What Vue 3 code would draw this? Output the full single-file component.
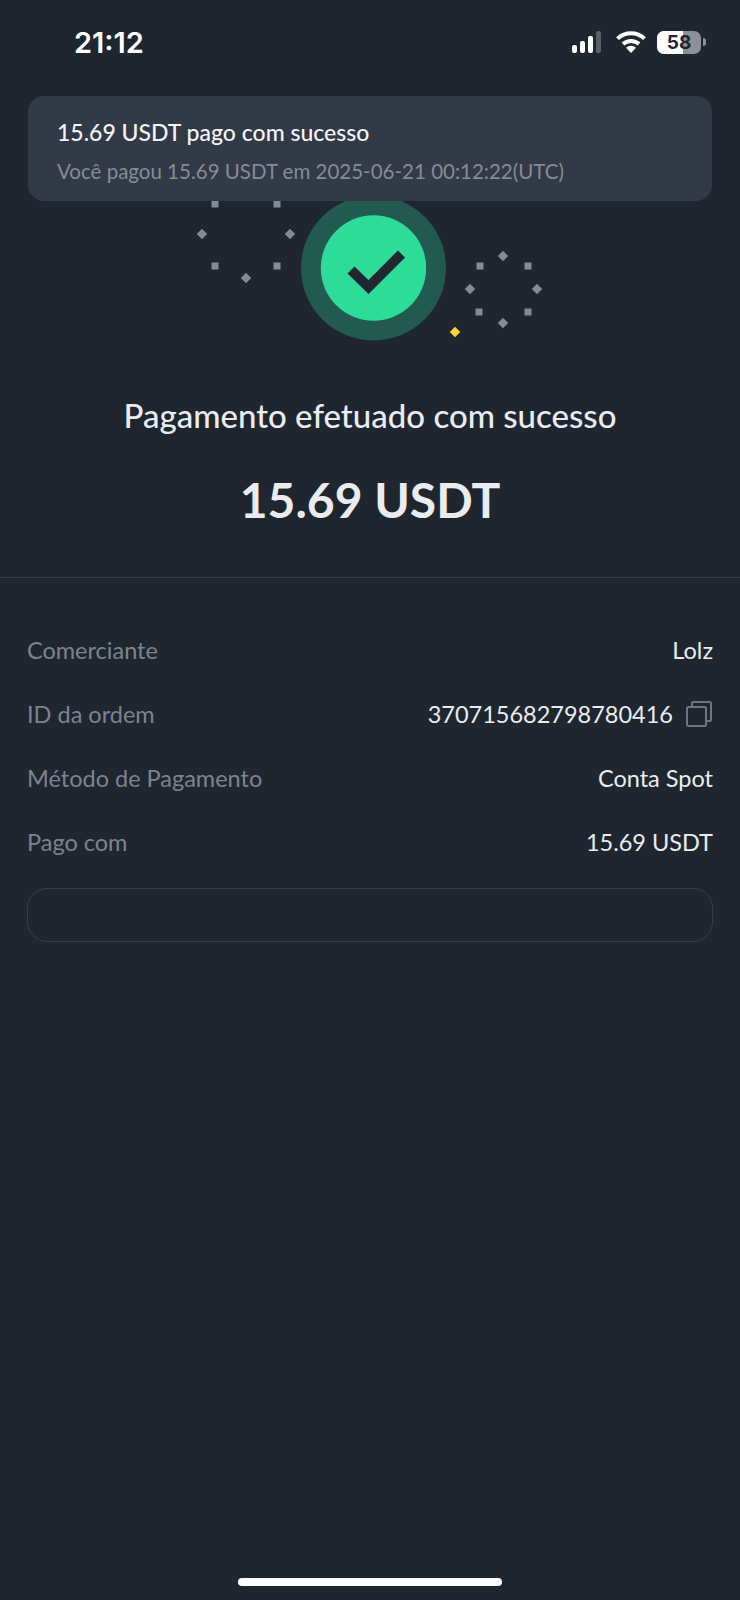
<template>
  <div class="page">
    <div class="status">
      <span class="time">21:12</span>
      <div class="status-icons">
        <svg width="34" height="24" viewBox="0 0 34 24">
          <rect x="1" y="15" width="5" height="8" rx="2" fill="#fff" />
          <rect x="9" y="11" width="5" height="12" rx="2" fill="#fff" />
          <rect x="17" y="6" width="5" height="17" rx="2" fill="#fff" />
          <rect x="25" y="1" width="5" height="22" rx="2" fill="#5b6068" />
        </svg>
        <svg class="wifi" width="32" height="24" viewBox="0 0 32 24">
          <path d="M2.5 8.6a19.5 19.5 0 0 1 27 0" fill="none" stroke="#fff" stroke-width="4" />
          <path d="M8 14a12 12 0 0 1 16 0" fill="none" stroke="#fff" stroke-width="4" />
          <path d="M16 23l-5-5.2a7 7 0 0 1 10 0z" fill="#fff" />
        </svg>
        <div class="battery">
          <div class="battery-body"><div class="battery-fill"></div><span>58</span></div>
          <div class="battery-cap"></div>
        </div>
      </div>
    </div>

    <div class="toast">
      <div class="toast-title">15.69 USDT pago com sucesso</div>
      <div class="toast-sub">Você pagou 15.69 USDT em 2025-06-21 00:12:22(UTC)</div>
    </div>

    <svg class="hero" width="740" height="200" viewBox="0 0 740 200">
      <rect
        v-for="(s, i) in squares"
        :key="'s' + i"
        :x="s[0] - 3.5"
        :y="s[1] - 3.5"
        width="7"
        height="7"
        fill="#858a94"
      />
      <rect
        v-for="(d, i) in diamonds"
        :key="'d' + i"
        :x="d[0] - 3.7"
        :y="d[1] - 3.7"
        width="7.4"
        height="7.4"
        fill="#858a94"
        :transform="`rotate(45 ${d[0]} ${d[1]})`"
      />
      <rect x="451.3" y="168.3" width="7.4" height="7.4" fill="#fcd535" transform="rotate(45 455 172)" />
      <circle cx="373.5" cy="108" r="72.5" fill="#235a50" />
      <circle cx="373.5" cy="108" r="52.7" fill="#2edc9a" />
      <path d="M351 110l17.5 17 33-33" fill="none" stroke="#1f2630" stroke-width="10" />
    </svg>

    <h1 class="title">Pagamento efetuado com sucesso</h1>
    <div class="amount">15.69 USDT</div>
    <div class="divider"></div>

    <div class="details">
      <div v-for="row in rows" :key="row.label" class="row">
        <span class="label">{{ row.label }}</span>
        <span class="value">
          {{ row.value }}
          <svg v-if="row.copy" class="copy" width="28" height="28" viewBox="0 0 28 28" fill="none" stroke="#6f7580" stroke-width="2">
            <rect x="2" y="7" width="19" height="19" rx="1.5" />
            <path d="M7 7V3.5A1.5 1.5 0 0 1 8.500 2h16A1.500 1.500 0 0 1 26 3.500v16a1.500 1.500 0 0 1-1.500 1.500H21" />
          </svg>
        </span>
      </div>
      <div class="empty-box"></div>
    </div>

    <div class="home-bar"></div>
  </div>
</template>

<script setup>
const squares = [
  [215, 44], [277, 44], [215, 106], [277, 106],
  [480, 106], [528, 106], [479, 152], [528, 152],
]
const diamonds = [
  [202, 74], [290, 74], [246, 118],
  [503, 96], [470, 129], [537, 129], [503, 163],
]
const rows = [
  { label: 'Comerciante', value: 'Lolz' },
  { label: 'ID da ordem', value: '370715682798780416', copy: true },
  { label: 'Método de Pagamento', value: 'Conta Spot' },
  { label: 'Pago com', value: '15.69 USDT' },
]
</script>

<style>
body {
  background: #1f2630;
}
</style>

<style scoped>
.page {
  position: relative;
  display: flex;
  flex-direction: column;
  width: 740px;
  height: 1600px;
  background: #1f2630;
  color: #eaecef;
  font-family: Lato, "Open Sans", sans-serif;
  overflow: hidden;
}

.status {
  display: flex;
  justify-content: space-between;
  align-items: center;
  height: 84px;
  padding: 0 34px 0 74px;
  margin-bottom: 76px;
}

.time {
  font-family: Inter, sans-serif;
  font-size: 29px;
  font-weight: 600;
  color: #fff;
}

.status-icons {
  display: flex;
  align-items: center;
  gap: 10px;
}

.battery {
  display: flex;
  align-items: center;
  gap: 2px;
}

.battery-body {
  position: relative;
  width: 44px;
  height: 23px;
  border-radius: 7px;
  background: #8d9196;
  overflow: hidden;
}

.battery-fill {
  width: 26px;
  height: 100%;
  background: #fff;
}

.battery-body span {
  position: absolute;
  inset: 0;
  text-align: center;
  font-family: Inter, sans-serif;
  font-size: 19px;
  font-weight: 700;
  line-height: 23px;
  color: #1f2630;
}

.battery-cap {
  width: 3px;
  height: 8px;
  border-radius: 0 3px 3px 0;
  background: #8d9196;
}

.toast {
  position: absolute;
  top: 96px;
  left: 28px;
  width: 684px;
  height: 105px;
  box-sizing: border-box;
  padding: 22px 29px;
  border-radius: 16px;
  background: #323947;
}

.toast-title {
  font-size: 23px;
  line-height: 28px;
  font-weight: 500;
  color: #f4f5f6;
}

.toast-sub {
  margin-top: 12px;
  font-size: 20.5px;
  line-height: 26px;
  color: #868b95;
}

.hero {
  display: block;
  flex: none;
}

.title {
  margin: 35px 0 0;
  text-align: center;
  font-size: 33px;
  line-height: 40px;
  font-weight: 500;
  color: #eaecef;
}

.amount {
  margin-top: 36px;
  text-align: center;
  font-size: 48px;
  line-height: 58px;
  font-weight: 700;
  color: #eaecef;
}

.divider {
  height: 1px;
  margin-top: 48px;
  background: #333a46;
}

.details {
  display: flex;
  flex-direction: column;
  padding: 40px 27px 0;
}

.row {
  display: flex;
  justify-content: space-between;
  align-items: center;
  height: 64px;
  font-size: 23.5px;
}

.label {
  color: #7d838e;
}

.value {
  display: flex;
  align-items: center;
  gap: 12px;
  color: #eaecef;
}

.empty-box {
  height: 54px;
  margin-top: 14px;
  box-sizing: border-box;
  border: 1px solid #363d49;
  border-radius: 20px;
}

.home-bar {
  position: absolute;
  left: 238px;
  bottom: 14px;
  width: 264px;
  height: 8px;
  border-radius: 4px;
  background: #fff;
}
</style>
